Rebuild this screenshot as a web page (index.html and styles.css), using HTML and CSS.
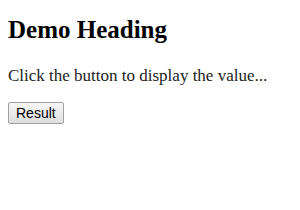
FILE: index.html
```html
<!DOCTYPE html>
<html lang="en">
<head>
    <meta charset="UTF-8">
    <title>Demo</title>
    <link rel="stylesheet" href="styles.css">
</head>
<body>
    <h2 class="heading">Demo Heading</h2>
    <p class="info">Click the button to display the value...</p>
    <button class="result-btn">Result</button>
</body>
</html>
```

FILE: styles.css
```css
body {
    margin: 8px;
    font-family: "Liberation Serif", "Times New Roman", serif;
    background: #fff;
    color: #000;
}
.heading {
    font-size: 25px;
    font-weight: bold;
    margin: 8px 0 0;
}
.info {
    font-size: 17px;
    margin: 22px 0 0;
    color: #222;
}
.result-btn {
    margin-top: 16px;
    font-family: "Liberation Sans", Arial, sans-serif;
    font-size: 14px;
    padding: 2px 7px;
    border: 1px solid #a0a0a0;
    border-radius: 2px;
    background: linear-gradient(#f6f6f6, #dedede);
    color: #000;
}
```
